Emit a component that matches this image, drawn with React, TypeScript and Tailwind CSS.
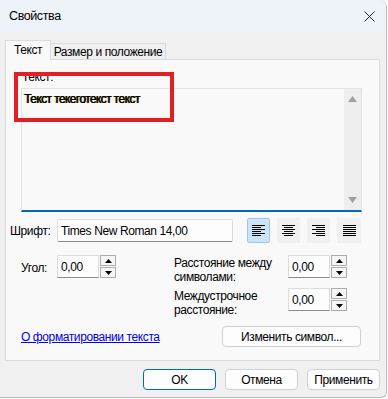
import React from 'react'

const font = { fontFamily: '"Liberation Sans", Arial, sans-serif' }

function Spin({ value }: { value: string }) {
  return (
    <div className="flex h-[23px] shrink-0">
      <div className="w-[42px] h-full bg-[#fdfdfd] border border-[#dcdcdc] border-b-[#8a8a8a] pl-[3px] flex items-center text-[12px] text-black">
        {value}
      </div>
      <div className="w-[17px] h-full flex flex-col gap-[1px] pl-[1px]">
        <div className="flex-1 border border-[#adadad] bg-[#f5f5f5] flex items-center justify-center">
          <svg width="7" height="4" viewBox="0 0 7 4" aria-hidden="true">
            <path d="M0 4 L3.5 0 L7 4 Z" fill="#000" />
          </svg>
        </div>
        <div className="flex-1 border border-[#adadad] bg-[#f5f5f5] flex items-center justify-center">
          <svg width="7" height="4" viewBox="0 0 7 4" aria-hidden="true">
            <path d="M0 0 L3.5 4 L7 0 Z" fill="#000" />
          </svg>
        </div>
      </div>
    </div>
  )
}

function AlignIcon({ kind }: { kind: 'left' | 'center' | 'right' | 'justify' }) {
  const rows = [13, 9, 13, 9, 13, 9]
  return (
    <svg width="13" height="12" viewBox="0 0 13 12" aria-hidden="true">
      {rows.map((w, i) => {
        const len = kind === 'justify' ? 13 : w
        const x = kind === 'left' || kind === 'justify' ? 0 : kind === 'right' ? 13 - len : (13 - len) / 2
        return <rect key={i} x={x} y={i * 2} width={len} height="1" fill="#000" />
      })}
    </svg>
  )
}

export default function App() {
  return (
    <div className="w-[388px] h-[399px] bg-white text-[12px] text-black tracking-[-0.4px]" style={font}>
      <div className="w-[387px] h-[398px] bg-[#f0f0f0] border-r border-b border-[#b9b9b9] rounded-tr-[8px] rounded-br-[6px] overflow-hidden flex flex-col">
        {/* Title bar */}
        <div className="h-[32px] shrink-0 bg-[#eef2f9] flex items-center justify-between pl-[9px] pr-[11px]">
          <span className="text-[12.5px]">Свойства</span>
          <svg width="11" height="11" viewBox="0 0 11 11" aria-hidden="true">
            <path d="M0.5 0.5 L10.5 10.5 M10.5 0.5 L0.5 10.5" stroke="#222" strokeWidth="1" />
          </svg>
        </div>

        {/* Body */}
        <div className="flex-1 pt-[8px] pl-[5px] pr-[6px]">
          {/* Tabs */}
          <div className="flex items-end h-[19px] relative z-10 whitespace-nowrap">
            <div className="w-[46px] h-[20px] -mb-[1px] bg-[#f9f9f9] border border-b-0 border-[#dadada] flex items-center justify-center pb-[1px]">
              Текст
            </div>
            <div className="w-[115px] h-[16px] bg-[#f0f0f0] border border-l-0 border-b-0 border-[#dadada] flex items-center justify-center">
              Размер и положение
            </div>
          </div>

          {/* Panel */}
          <div className="w-[375px] h-[302px] bg-[#f9f9f9] border border-[#dadada] flex flex-col">
            <div className="pl-[16px] pt-[10px] leading-[14px]">Текст:</div>
            <div className="relative ml-[15px] mt-[4px] w-[341px] h-[124px] bg-[#f9f9f9] border border-[#e3e3e3] border-b-2 border-b-[#0067c0] flex">
              <div
                className="flex-1 pl-[2px] pt-[1px] text-[12px] tracking-[-0.6px]"
                style={{ textShadow: '0.5px 0 0 #000, -0.4px 0 0 #b8a000' }}
              >
                Текст текеготекст текст
              </div>
              <div className="w-[17px] bg-[#eeeeee] flex flex-col items-center justify-between py-[7px]">
                <svg width="9" height="6" viewBox="0 0 9 6" aria-hidden="true">
                  <path d="M0 6 L4.5 0 L9 6 Z" fill="#a0a0a0" />
                </svg>
                <svg width="9" height="6" viewBox="0 0 9 6" aria-hidden="true">
                  <path d="M0 0 L4.5 6 L9 0 Z" fill="#a0a0a0" />
                </svg>
              </div>
              {/* red highlight */}
              <div className="absolute left-[-8px] top-[-17px] w-[160px] h-[50px] border-[4px] border-[#e31e24]" />
            </div>

            {/* Font row */}
            <div className="flex items-center mt-[6px] h-[25px]">
              <span className="w-[51px] pl-[4px]">Шрифт:</span>
              <div className="w-[176px] h-[23px] bg-[#fdfdfd] border border-[#dcdcdc] border-b-[#8a8a8a] rounded-[2px] flex items-center pl-[3px]">
                Times New Roman 14,00
              </div>
              <div className="ml-[14px] flex gap-[7px]">
                <div className="w-[23px] h-[25px] bg-[#cce4f7] border border-[#99c9ef] rounded-[2px] flex items-center justify-center">
                  <AlignIcon kind="left" />
                </div>
                <div className="w-[23px] h-[25px] bg-[#f0f0f0] flex items-center justify-center">
                  <AlignIcon kind="center" />
                </div>
                <div className="w-[23px] h-[25px] bg-[#f0f0f0] flex items-center justify-center">
                  <AlignIcon kind="right" />
                </div>
                <div className="w-[24px] h-[25px] bg-[#f0f0f0] flex items-center justify-center">
                  <AlignIcon kind="justify" />
                </div>
              </div>
            </div>

            {/* Spin rows */}
            <div className="flex mt-[12px]">
              <div className="w-[168px] flex items-start">
                <span className="w-[51px] pl-[15px] pt-[4px]">Угол:</span>
                <Spin value="0,00" />
              </div>
              <div className="flex flex-col gap-[10px]">
                <div className="flex items-start h-[23px]">
                  <span className="w-[114px] leading-[14px] pt-[1px]">
                    Расстояние между
                    <br />
                    символами:
                  </span>
                  <Spin value="0,00" />
                </div>
                <div className="flex items-start h-[23px]">
                  <span className="w-[114px] leading-[14px] pt-[1px]">
                    Междустрочное
                    <br />
                    расстояние:
                  </span>
                  <Spin value="0,00" />
                </div>
              </div>
            </div>

            {/* Link + button */}
            <div className="flex items-center justify-between mt-[15px] pl-[15px] pr-[18px]">
              <a className="text-[#0000ee] underline">О форматировании текста</a>
              <button className="w-[139px] h-[21px] bg-[#fdfdfd] border border-[#d0d0d0] rounded-[4px] flex items-center justify-center">
                Изменить символ...
              </button>
            </div>
          </div>

          {/* Bottom buttons */}
          <div className="flex justify-end gap-[9px] mt-[8px]">
            <button className="w-[73px] h-[21px] bg-[#fdfdfd] border border-[#0067c0] rounded-[4px] flex items-center justify-center">
              OK
            </button>
            <button className="w-[73px] h-[21px] bg-[#fdfdfd] border border-[#d0d0d0] rounded-[4px] flex items-center justify-center">
              Отмена
            </button>
            <button className="w-[73px] h-[21px] bg-[#fdfdfd] border border-[#d0d0d0] rounded-[4px] flex items-center justify-center">
              Применить
            </button>
          </div>
        </div>
      </div>
    </div>
  )
}
